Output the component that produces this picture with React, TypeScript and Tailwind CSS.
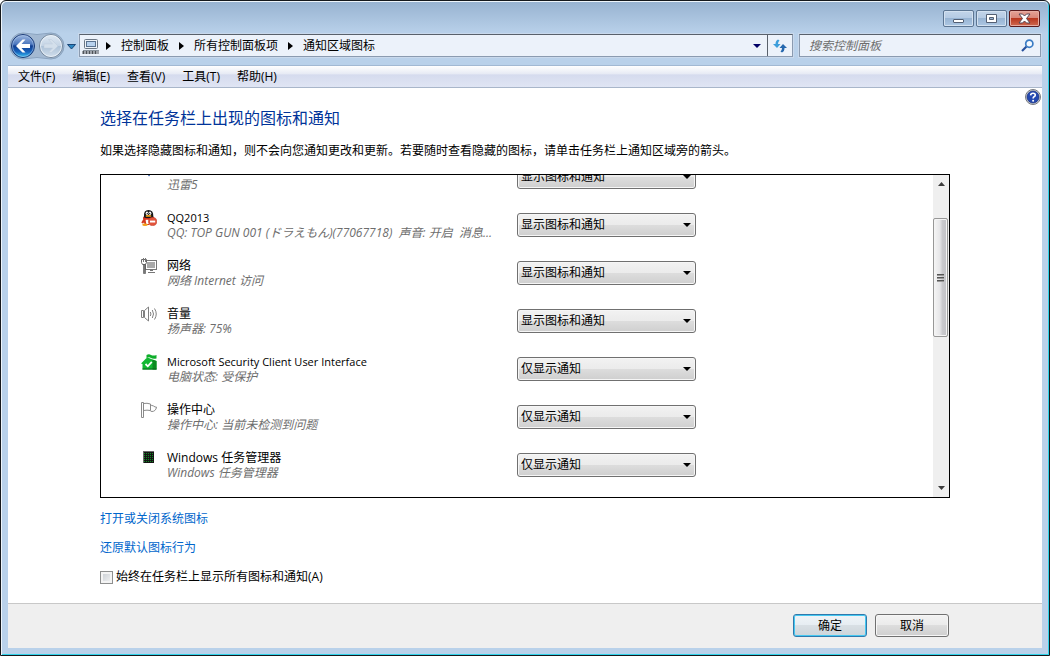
import { useState, type ReactNode } from "react";

const GLOSS =
  "bg-[linear-gradient(#f2f2f2_0%,#ebebeb_49%,#dddddd_50%,#cfcfcf_100%)] shadow-[inset_0_0_0_1px_#f6f6f6]";

function QQIcon() {
  return (
    <svg viewBox="0 0 16 16" className="size-4">
      <path d="M3 8 L0.3 12.5 L1.5 13.5 L3 12.5 L4 15 L8 15 L8 8 Z" fill="#d23a22" />
      <path d="M3 6 Q2.5 0 7.5 0 Q12.5 0 12.3 6 L13 8.5 H2.2 Z" fill="#161616" />
      <ellipse cx="6" cy="3.2" rx="1.3" ry="1.7" fill="#fff" />
      <ellipse cx="9" cy="3.2" rx="1.3" ry="1.7" fill="#fff" />
      <circle cx="6.3" cy="3.4" r="0.6" fill="#111" />
      <circle cx="8.7" cy="3.4" r="0.6" fill="#111" />
      <ellipse cx="7.5" cy="5.9" rx="3" ry="0.9" fill="#f5a51b" />
      <path d="M2 7 Q7.5 9.5 12.8 7 L12.8 9 Q7.5 11 2.2 9 Z" fill="#e0341d" />
      <path d="M4.6 9.8 H8 V14 H5.2 Z" fill="#fff" />
      <ellipse cx="4" cy="14.7" rx="2.8" ry="1.2" fill="#f2a01c" />
      <circle cx="11.6" cy="11.5" r="4.1" fill="#e2543c" stroke="#c63622" strokeWidth="0.6" />
      <rect x="9" y="10.6" width="5.2" height="1.9" fill="#fff" />
    </svg>
  );
}

function NetworkIcon() {
  return (
    <svg viewBox="0 0 16 16" className="size-4">
      <rect x="4.5" y="2.5" width="11" height="9" fill="#fff" stroke="#777" />
      <rect x="6" y="4" width="8" height="6" fill="#a9a9a9" />
      <path d="M7 14.5 H14 M9 12.5 H12" stroke="#777" fill="none" />
      <path d="M0.5 1.5 H5.5 V4.5 L4.5 6.5 H1.5 L0.5 4.5 Z" fill="#fff" stroke="#666" />
      <path d="M2.5 0 V4 M4.5 0 V4" stroke="#777" />
      <path d="M2.5 6.5 H4.5 V15.5 H2.5 Z" fill="#777" stroke="#555" strokeWidth="0.6" />
    </svg>
  );
}

function VolumeIcon() {
  return (
    <svg viewBox="0 0 16 16" className="size-4" fill="none" stroke="#808080">
      <path d="M0.5 4.5 H2.5 V11.5 H0.5 Z" fill="#fff" />
      <path d="M3.5 4.5 L7.5 1 V15 L3.5 11.5 Z" fill="#fff" />
      <path d="M9.3 6 Q10.6 8 9.3 10 M11.3 4 Q13.7 8 11.3 12 M13.5 2.5 Q17 8 13.5 13.5" />
    </svg>
  );
}

function SecurityIcon() {
  return (
    <svg viewBox="0 0 16 16" className="size-4">
      <path d="M5.5 1 Q8 -0.5 10 1 Q12.5 2 15.5 1 V4.5 Q12 5.5 9.5 3.8 Q8 2.5 5.5 4.5 Z" fill="#0fae2b" />
      <path d="M0 9.5 L5 4.5 Q7 3 9 4.5 L11.5 5.5 L15.5 7 V15.5 H1.5 V10 Z" fill="#12b832" />
      <path d="M11.5 5.5 L15.5 7 V15.5 H11.5 Z" fill="#0b8a20" />
      <path d="M1.5 15 H15.5" stroke="#08661a" strokeWidth="1" />
      <path d="M4.5 10 L6.8 12.3 L10.8 7.8" stroke="#fff" strokeWidth="1.8" fill="none" />
    </svg>
  );
}

function FlagIcon() {
  return (
    <svg viewBox="0 0 16 16" className="size-4" fill="#fff" stroke="#8a8a8a">
      <path d="M8.5 3.5 Q11 3 12.5 4 Q14 5.3 15.6 5.2 Q14.5 9.5 11 9.5 Q9.5 9.5 8.5 8 Z" />
      <path d="M2.5 1.5 Q6 0.8 9.5 2 V8.5 Q6 7.8 2.5 8.5 Z" />
      <path d="M0.5 0.5 H2.5 V15.5 H0.5 Z" />
    </svg>
  );
}

function TaskManagerIcon() {
  return (
    <svg viewBox="0 0 16 16" className="size-4">
      <rect x="2" y="1" width="11" height="12" fill="#141414" />
      <path
        d="M3 3.5 H12 M3 5.5 H12 M3 7.5 H12 M3 9.5 H12 M3 11.5 H12"
        stroke="#0f8a22"
        strokeDasharray="1 1"
      />
      <path d="M2.5 1 V13 M2 1.5 H13" stroke="#6a6a6a" />
    </svg>
  );
}

function ThunderIcon() {
  return (
    <svg viewBox="0 0 16 16" className="size-4">
      <path d="M1 4 L9 1 L14 6 L8 14.5 Z" fill="#1d4fa5" />
    </svg>
  );
}

type Item = { name: string; detail: string; icon: ReactNode; mode: string; latin?: boolean };

const SHOW_ALL = "显示图标和通知";
const NOTIFY_ONLY = "仅显示通知";
const HIDE = "隐藏图标和通知";

const items: Item[] = [
  { name: "迅雷5", detail: "迅雷5", icon: <ThunderIcon />, mode: SHOW_ALL },
  {
    name: "QQ2013",
    detail: "QQ: TOP GUN 001 (ドラえもん)(77067718)  声音: 开启  消息...",
    icon: <QQIcon />,
    mode: SHOW_ALL,
    latin: true,
  },
  { name: "网络", detail: "网络 Internet 访问", icon: <NetworkIcon />, mode: SHOW_ALL },
  { name: "音量", detail: "扬声器: 75%", icon: <VolumeIcon />, mode: SHOW_ALL },
  {
    name: "Microsoft Security Client User Interface",
    detail: "电脑状态: 受保护",
    icon: <SecurityIcon />,
    mode: NOTIFY_ONLY,
    latin: true,
  },
  { name: "操作中心", detail: "操作中心: 当前未检测到问题", icon: <FlagIcon />, mode: NOTIFY_ONLY },
  { name: "Windows 任务管理器", detail: "Windows 任务管理器", icon: <TaskManagerIcon />, mode: NOTIFY_ONLY },
];

function Row({ item }: { item: Item }) {
  const [mode, setMode] = useState(item.mode);
  return (
    <li className="flex h-12 items-center pl-10">
      <div className="-mt-[14px] mr-[10px] shrink-0">{item.icon}</div>
      <div className="w-[350px] leading-[15px]">
        <div className={item.latin ? "text-[11px] leading-[15px]" : ""}>{item.name}</div>
        <div className="whitespace-pre text-[#6d6d6d] italic">{item.detail}</div>
      </div>
      <div className="relative w-[179px]">
        <select
          aria-label={item.name}
          value={mode}
          onChange={(e) => setMode(e.target.value)}
          className={`block h-6 w-full appearance-none rounded-[3px] border border-[#707070] pl-[3px] ${GLOSS}`}
        >
          <option>{SHOW_ALL}</option>
          <option>{HIDE}</option>
          <option>{NOTIFY_ONLY}</option>
        </select>
        <svg viewBox="0 0 8 4" className="pointer-events-none absolute top-[10px] right-[5px] h-1 w-2">
          <path d="M0 0 H8 L4 4 Z" />
        </svg>
      </div>
    </li>
  );
}

function CrumbArrow() {
  return (
    <svg viewBox="0 0 5 8" className="mx-[10px] h-2 w-[5px] shrink-0">
      <path d="M0 0 L5 4 L0 8 Z" />
    </svg>
  );
}

function CaptionButton({ label, tone, children }: { label: string; tone: string; children: ReactNode }) {
  return (
    <button
      aria-label={label}
      className={`flex h-[17px] w-[31px] items-center justify-center rounded-[2px] border ${tone}`}
    >
      {children}
    </button>
  );
}

function Caption() {
  const blue =
    "border-[#5c7592] bg-[linear-gradient(#c3d5e9_0%,#b4cae3_49%,#98b4d3_50%,#adc8e4_100%)] shadow-[inset_0_0_0_1px_#d3e1f0]";
  const red =
    "border-[#5a1a1c] bg-[linear-gradient(#e5a397_0%,#d88476_49%,#b9371f_50%,#cf6a50_100%)] shadow-[inset_0_0_0_1px_#e6aca2]";
  return (
    <div className="flex h-8 justify-end gap-[2px] pt-2 pr-px">
      <CaptionButton label="最小化" tone={blue}>
        <svg viewBox="0 0 13 11" className="h-[11px] w-[13px]">
          <rect x="1.5" y="6.5" width="10" height="3" rx="0.5" fill="#fff" stroke="#535f73" />
        </svg>
      </CaptionButton>
      <CaptionButton label="最大化" tone={blue}>
        <svg viewBox="0 0 11 9" className="h-[9px] w-[11px]">
          <path
            d="M0.5 0.5 H10.5 V8.5 H0.5 Z M3.5 3.5 V5.5 H7.5 V3.5 Z"
            fill="#fff"
            fillRule="evenodd"
            stroke="#535f73"
          />
        </svg>
      </CaptionButton>
      <CaptionButton label="关闭" tone={red}>
        <svg viewBox="0 0 13 11" className="h-[11px] w-[13px]">
          <path
            d="M1 1 H4.5 L6.5 3 L8.5 1 H12 L8.5 5.5 L12 10 H8.5 L6.5 8 L4.5 10 H1 L4.5 5.5 Z"
            fill="#fff"
            stroke="#564654"
          />
        </svg>
      </CaptionButton>
    </div>
  );
}

function Travel() {
  return (
    <svg viewBox="0 0 71 28" className="h-7 w-[71px] shrink-0" role="img" aria-label="后退和前进">
      <defs>
        <linearGradient id="back" x1="0" y1="0" x2="0" y2="1">
          <stop offset="0" stopColor="#9fb9e0" />
          <stop offset="0.42" stopColor="#4d78bf" />
          <stop offset="0.5" stopColor="#123f92" />
          <stop offset="0.75" stopColor="#1763bd" />
          <stop offset="1" stopColor="#37c6f5" />
        </linearGradient>
        <linearGradient id="forward" x1="0" y1="0" x2="0" y2="1">
          <stop offset="0" stopColor="#dfe9f3" />
          <stop offset="0.48" stopColor="#c4d4e5" />
          <stop offset="0.52" stopColor="#adc2d8" />
          <stop offset="1" stopColor="#d3e0ed" />
        </linearGradient>
      </defs>
      <path
        d="M15 1 Q29 4 43 1 A13 13 0 0 1 43 27 Q29 24 15 27 A13 13 0 0 1 15 1 Z"
        fill="#a3b9d2"
        stroke="#8aa3bf"
      />
      <circle cx="15" cy="14" r="11.5" fill="url(#back)" stroke="#1b3b78" />
      <circle cx="15" cy="14" r="10.5" fill="none" stroke="#a8c4ea" strokeOpacity="0.6" />
      <path d="M8 14 L14.5 7.5 H17.5 L13.5 12 H22 V16 H13.5 L17.5 20.5 H14.5 Z" fill="#fff" />
      <circle cx="43" cy="14" r="11.5" fill="url(#forward)" stroke="#74879c" />
      <circle cx="43" cy="14" r="10.5" fill="none" stroke="#eef4fa" strokeOpacity="0.8" />
      <path
        d="M50 14 L43.5 7.5 H40.5 L44.5 12 H36 V16 H44.5 L40.5 20.5 H43.5 Z"
        fill="#d3dfeb"
        stroke="#bccbdb"
        strokeWidth="0.5"
      />
      <path d="M59.5 12.5 H67.5 L63.5 17 Z" fill="#2a86c2" stroke="#1c4778" />
    </svg>
  );
}

function AddressBar() {
  const crumbs = ["控制面板", "所有控制面板项", "通知区域图标"];
  const field = "mt-[2px] border border-[#8b9bb0] border-t-[#59616b] bg-[#ecf2fa] shadow-[0_0_0_1px_#c9d9ec]";
  return (
    <div className="flex items-start">
      <Travel />
      <div className={`flex h-[23px] min-w-0 flex-1 items-center pl-[2px] ${field}`}>
        <svg viewBox="0 0 17 16" className="h-4 w-[17px] shrink-0">
          <rect x="2.5" y="1.5" width="13" height="9" rx="1" fill="#eef3f8" stroke="#6b7785" />
          <rect x="4.5" y="3.5" width="9" height="5" fill="#b8d2ee" stroke="#5b7390" />
          <path d="M1 12.5 H17" stroke="#8a949e" />
          <path d="M0.5 14.5 H16.5" stroke="#4e5358" strokeWidth="3" strokeDasharray="2 1" />
        </svg>
        <nav className="-ml-[3px] flex items-center whitespace-nowrap">
          {crumbs.map((c) => (
            <span key={c} className="flex items-center">
              <CrumbArrow />
              <a href="#crumb">{c}</a>
            </span>
          ))}
        </nav>
        <button aria-label="以前的位置" className="mr-[6px] ml-auto">
          <svg viewBox="0 0 8 4" className="h-1 w-2">
            <path d="M0 0 H8 L4 4 Z" fill="#000066" />
          </svg>
        </button>
        <button aria-label="刷新" className="flex h-full w-[25px] items-center justify-center border-l border-[#59616b]">
          <svg viewBox="0 0 14 14" className="size-[14px]">
            <path d="M5 0.5 Q2.5 1.5 2.5 5 H0 L4 9 L7.5 5 H5 Q5 2.5 6.5 1.5 Z" fill="#3c9edb" />
            <path d="M9 13.5 Q11.5 12.5 11.5 9 H14 L10 5 L6.5 9 H9 Q9 11.5 7.5 12.5 Z" fill="#2668ae" />
          </svg>
        </button>
      </div>
      <div className={`ml-[6px] flex h-[23px] w-[242px] items-center pr-[6px] pl-[9px] ${field}`}>
        <input
          aria-label="搜索控制面板"
          placeholder="搜索控制面板"
          className="min-w-0 flex-1 bg-transparent outline-none placeholder:text-[#6d6d6d] placeholder:italic"
        />
        <svg viewBox="0 0 13 13" className="size-[13px] shrink-0" fill="none">
          <path d="M1 12 L5.5 7.5" stroke="#27509c" strokeWidth="2.2" />
          <circle cx="8.3" cy="4.7" r="3.6" stroke="#3a7cc4" strokeWidth="1.7" fill="#f4f9fe" />
        </svg>
      </div>
    </div>
  );
}

function ScrollBar() {
  return (
    <div className="flex w-4 shrink-0 flex-col items-center bg-[#efefef]" aria-hidden="true">
      <svg viewBox="0 0 7 4" className="mt-[7px] h-1 w-[7px] shrink-0">
        <path d="M0 4 H7 L3.5 0 Z" fill="#3c3c3c" />
      </svg>
      <div className="mt-8 flex h-[119px] w-[15px] shrink-0 flex-col items-center justify-center gap-px self-start rounded-[2px] border border-[#979797] bg-[linear-gradient(90deg,#f5f5f5_0%,#e6e6e8_45%,#c9c9cd_65%,#c2c2c6_100%)] shadow-[inset_0_0_0_1px_#f4f4f4]">
        <div className="h-[2px] w-[7px] border-t border-[#555] bg-[#999]" />
        <div className="h-[2px] w-[7px] border-t border-[#555] bg-[#999]" />
        <div className="h-[2px] w-[7px] border-t border-[#555] bg-[#999]" />
      </div>
      <svg viewBox="0 0 7 4" className="mt-auto mb-[7px] h-1 w-[7px] shrink-0">
        <path d="M0 0 H7 L3.5 4 Z" fill="#3c3c3c" />
      </svg>
    </div>
  );
}

export default function App() {
  const [always, setAlways] = useState(false);
  const menus = ["文件(F)", "编辑(E)", "查看(V)", "工具(T)", "帮助(H)"];
  return (
    <div className="h-screen min-h-[480px] bg-white font-['Open_Sans','Noto_Sans_CJK_SC',sans-serif] text-[12px] leading-4 text-black">
      <div className="flex h-full flex-col rounded-t-[6px] border border-[#15181c] bg-[#b9d1ea] shadow-[inset_1px_1px_0_0_#eef5fb,inset_-1px_-1px_0_0_#2fd3ea]">
        <header className="mx-px mt-px shrink-0 rounded-t-[5px] bg-[linear-gradient(#98b3d1_0%,#b9d1ea_50%,#b9d1ea_100%)] pr-[7px] pl-[6px]">
          <Caption />
          <div className="-mt-[2px] pb-[5px]">
            <AddressBar />
          </div>
        </header>
        <div className="mx-[7px] mb-[7px] flex min-h-0 flex-1 flex-col bg-white">
          <nav className="flex h-[23px] shrink-0 items-center gap-[17px] border-t border-b border-t-[#a2b9d3] border-b-[#a9b6ca] bg-[linear-gradient(#ffffff_0%,#e6eaf4_38%,#d5dbee_42%,#e0e5f4_100%)] pl-[10px]">
            {menus.map((m) => (
              <button key={m}>{m}</button>
            ))}
          </nav>
          <main className="relative flex min-h-0 flex-1 flex-col px-[92px] pt-[18px] pb-[18px]">
            <button aria-label="帮助" className="absolute top-px right-px">
              <svg viewBox="0 0 16 16" className="size-4">
                <circle cx="8" cy="8" r="7.5" fill="#d0d3d8" stroke="#77797e" />
                <circle cx="8" cy="8" r="6" fill="#2448b0" stroke="#152c78" strokeWidth="0.7" />
                <path
                  d="M5.6 6.3 Q5.8 4.2 8 4.2 Q10.3 4.2 10.3 6 Q10.3 7.2 9 7.8 Q8.1 8.3 8.1 9.5"
                  fill="none"
                  stroke="#fff"
                  strokeWidth="1.6"
                />
                <circle cx="8.1" cy="11.7" r="1" fill="#fff" />
              </svg>
            </button>
            <h1 className="text-[16px] leading-6 text-[#003399]">选择在任务栏上出现的图标和通知</h1>
            <p className="mt-[13px] mb-[15px]">
              如果选择隐藏图标和通知，则不会向您通知更改和更新。若要随时查看隐藏的图标，请单击任务栏上通知区域旁的箭头。
            </p>
            <section className="flex min-h-0 flex-1 overflow-hidden border border-black">
              <ul className="-mt-[22px] min-w-0 flex-1">
                {items.map((item) => (
                  <Row key={item.name} item={item} />
                ))}
              </ul>
              <ScrollBar />
            </section>
            <div className="mt-[13px] flex flex-col items-start gap-[13px] text-[#0066cc]">
              <a href="#system-icons">打开或关闭系统图标</a>
              <a href="#restore">还原默认图标行为</a>
            </div>
            <label className="mt-[13px] flex items-center gap-[3px]">
              <input
                type="checkbox"
                checked={always}
                onChange={(e) => setAlways(e.target.checked)}
                className="size-[13px] appearance-none border border-[#8e8f8f] bg-[linear-gradient(135deg,#c6cbd1,#f6f6f6)] shadow-[inset_0_0_0_2px_#f4f4f4] checked:bg-[#3c6fb4] checked:bg-none"
              />
              始终在任务栏上显示所有图标和通知(A)
            </label>
          </main>
          <footer className="flex h-[45px] shrink-0 items-center justify-end gap-2 border-t border-[#c8c8c8] bg-[#efefef] pr-[93px] pb-px">
            <button className="h-[23px] w-[74px] rounded-[3px] border border-[#3079ac] bg-[linear-gradient(#f0f4f7_0%,#e6edf2_49%,#d8dfe4_50%,#cdd5da_100%)] shadow-[inset_0_0_0_1px_#45c8f1]">
              确定
            </button>
            <button className={`h-[23px] w-[74px] rounded-[3px] border border-[#707070] ${GLOSS}`}>取消</button>
          </footer>
        </div>
      </div>
    </div>
  );
}
